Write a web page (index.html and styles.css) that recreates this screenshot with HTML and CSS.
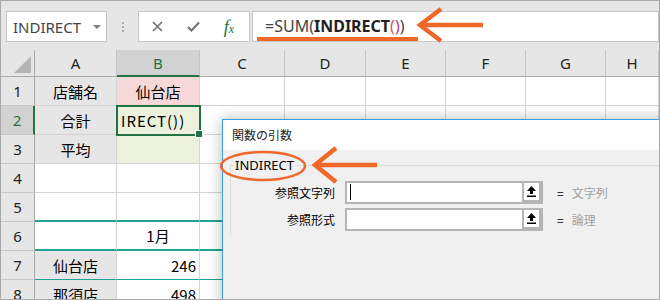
FILE: index.html
```html
<!DOCTYPE html>
<html lang="ja">
<head>
    <meta charset="UTF-8">
    <title>INDIRECT 関数の引数</title>
    <link rel="stylesheet" href="styles.css">
</head>
<body>
<div class="frame">
    <!-- 数式バー -->
    <div class="toolbar">
        <div class="name-box"><span>INDIRECT</span><span class="caret"></span></div>
        <div class="grip"><i></i><i></i><i></i></div>
        <div class="fx-buttons">
            <svg width="11" height="11" viewBox="0 0 11 11"><path d="M1 1L10 10M10 1L1 10" stroke="#6e6e6e" stroke-width="1.6" fill="none"/></svg>
            <svg width="13" height="11" viewBox="0 0 13 11"><path d="M1 6L4.5 9.5L12 1.5" stroke="#6e6e6e" stroke-width="2" fill="none"/></svg>
            <span class="fx">f<small>x</small></span>
        </div>
        <div class="formula">=SUM(<b>INDIRECT</b><span class="paren-a">(</span><span class="paren-b">)</span>)</div>
    </div>

    <!-- シート -->
    <div class="sheet">
        <div class="hd corner"><span class="tri"></span></div>
        <div class="hd">A</div><div class="hd sel-col">B</div><div class="hd">C</div><div class="hd">D</div>
        <div class="hd">E</div><div class="hd">F</div><div class="hd">G</div><div class="hd">H</div>

        <div class="rh">1</div>
        <div class="cell gray">店舗名</div><div class="cell pink">仙台店</div>
        <div class="cell"></div><div class="cell"></div><div class="cell"></div><div class="cell"></div><div class="cell"></div><div class="cell"></div>

        <div class="rh sel-row">2</div>
        <div class="cell gray">合計</div><div class="cell lime left active">IRECT())</div>
        <div class="cell"></div><div class="cell"></div><div class="cell"></div><div class="cell"></div><div class="cell"></div><div class="cell"></div>

        <div class="rh">3</div>
        <div class="cell gray">平均</div><div class="cell lime"></div>
        <div class="cell"></div><div class="cell"></div><div class="cell"></div><div class="cell"></div><div class="cell"></div><div class="cell"></div>

        <div class="rh">4</div>
        <div class="cell"></div><div class="cell"></div>
        <div class="cell"></div><div class="cell"></div><div class="cell"></div><div class="cell"></div><div class="cell"></div><div class="cell"></div>

        <div class="rh">5</div>
        <div class="cell line-thick"></div><div class="cell line-thick"></div><div class="cell line-thick"></div>
        <div class="cell"></div><div class="cell"></div><div class="cell"></div><div class="cell"></div><div class="cell"></div>

        <div class="rh">6</div>
        <div class="cell line-thick"></div><div class="cell line-thick">1月</div><div class="cell line-thick"></div>
        <div class="cell"></div><div class="cell"></div><div class="cell"></div><div class="cell"></div><div class="cell"></div>

        <div class="rh">7</div>
        <div class="cell gray line-thin">仙台店</div><div class="cell num line-thin">246</div><div class="cell line-thin"></div>
        <div class="cell"></div><div class="cell"></div><div class="cell"></div><div class="cell"></div><div class="cell"></div>

        <div class="rh">8</div>
        <div class="cell gray">那須店</div><div class="cell num">498</div><div class="cell"></div>
        <div class="cell"></div><div class="cell"></div><div class="cell"></div><div class="cell"></div><div class="cell"></div>
    </div>

    <!-- 関数の引数ダイアログ -->
    <div class="dialog">
        <div class="dialog-title">関数の引数</div>
        <fieldset class="args">
            <legend>INDIRECT</legend>
            <div class="arg-row">
                <span class="arg-label">参照文字列</span>
                <div class="arg-box">
                    <div class="arg-field"><span class="text-cursor"></span></div>
                    <div class="ref-btn"><span class="ref-icon"><svg width="9" height="11" viewBox="0 0 9 11"><path d="M4.5 0L9 5H6V8H3V5H0Z M0 9.5H9V11H0Z" fill="#000"/></svg></span></div>
                </div>
                <span class="eq">=</span>
                <span class="val">文字列</span>
            </div>
            <div class="arg-row">
                <span class="arg-label">参照形式</span>
                <div class="arg-box">
                    <div class="arg-field"></div>
                    <div class="ref-btn"><span class="ref-icon"><svg width="9" height="11" viewBox="0 0 9 11"><path d="M4.5 0L9 5H6V8H3V5H0Z M0 9.5H9V11H0Z" fill="#000"/></svg></span></div>
                </div>
                <span class="eq">=</span>
                <span class="val">論理</span>
            </div>
        </fieldset>
    </div>

    <!-- 注釈（オレンジの線・矢印・丸） -->
    <svg class="marks" width="660" height="300" viewBox="0 0 660 300">
        <rect x="257" y="37" width="161" height="4" fill="#f0672a"/>
        <path d="M483 25H421" stroke="#f0672a" stroke-width="4.5"/>
        <polyline points="441,9 420,25 441,41" fill="none" stroke="#f0672a" stroke-width="4.5"/>
        <ellipse cx="263" cy="166" rx="42" ry="14" fill="none" stroke="#f0672a" stroke-width="2.5"/>
        <path d="M377 165H316" stroke="#f0672a" stroke-width="4.5"/>
        <polyline points="336,148 315,165 336,182" fill="none" stroke="#f0672a" stroke-width="4.5"/>
    </svg>
</div>
</body>
</html>
```

FILE: styles.css
```css
* {
    box-sizing: border-box;
}

body {
    margin: 0;
    background: #fff;
    font-family: "Noto Sans", "Noto Sans CJK JP", sans-serif;
}

.frame {
    position: relative;
    width: 660px;
    height: 300px;
    border: 1px solid #a9a9a9;
    overflow: hidden;
    background: #e6e6e6;
}

/* 数式バー */
.toolbar {
    display: flex;
    align-items: flex-start;
    height: 49px;
    padding-top: 10px;
}

.name-box {
    display: flex;
    align-items: center;
    justify-content: space-between;
    margin-left: 5px;
    width: 101px;
    height: 31px;
    padding: 0 5px 0 6px;
    background: #fff;
    border: 1px solid #c6c6c6;
    font-size: 15px;
    color: #444;
}

.caret {
    border-left: 4px solid transparent;
    border-right: 4px solid transparent;
    border-top: 4px solid #7a7a7a;
}

.grip {
    display: flex;
    flex-direction: column;
    align-items: center;
    gap: 2px;
    width: 31px;
    padding-top: 11px;
}

.grip i {
    width: 2px;
    height: 2px;
    background: #adadad;
}

.fx-buttons {
    display: grid;
    grid-template-columns: repeat(3, 36px);
    justify-items: center;
    align-items: center;
    width: 112px;
    height: 31px;
    background: #fff;
    border: 1px solid #c6c6c6;
}

.fx {
    font-family: "Liberation Serif", serif;
    font-style: italic;
    font-size: 18px;
    color: #217346;
    line-height: 1;
}

.fx small {
    font-size: 12px;
}

.formula {
    flex: 1;
    margin-left: 2px;
    height: 31px;
    padding-left: 12px;
    background: #fff;
    border: 1px solid #c6c6c6;
    font-size: 16px;
    line-height: 29px;
    color: #444;
}

.formula b {
    color: #222;
}

.paren-a {
    color: #d4553c;
}

.paren-b {
    color: #b6359d;
}

/* シート */
.sheet {
    display: grid;
    grid-template-columns: 34px 82px 83px 85px 81px 80px 80px 80px 1fr;
    grid-template-rows: 27px repeat(8, 29px);
    background: #fff;
}

.hd,
.rh {
    display: flex;
    align-items: center;
    justify-content: center;
    background: #e6e6e6;
    font-size: 15px;
    color: #222;
}

.hd {
    border-right: 1px solid #c6c6c6;
    border-bottom: 1px solid #ababab;
}

.corner {
    justify-content: flex-end;
    align-items: flex-end;
    padding: 0 3px 3px 0;
    border-right-color: #ababab;
}

.tri {
    width: 17px;
    height: 17px;
    background: #b4b4b4;
    clip-path: polygon(100% 0, 100% 100%, 0 100%);
}

.sel-col {
    background: #d2d2d2;
    color: #217346;
    border-bottom: 2px solid #217346;
}

.rh {
    border-right: 1px solid #ababab;
    border-bottom: 1px solid #c6c6c6;
}

.sel-row {
    background: #d2d2d2;
    color: #217346;
    border-right: 2px solid #217346;
}

.cell {
    display: flex;
    align-items: center;
    justify-content: center;
    border-right: 1px solid #d4d4d4;
    border-bottom: 1px solid #d4d4d4;
    font-family: "Noto Sans CJK JP", sans-serif;
    font-size: 15px;
    color: #000;
}

.gray {
    background: #e7e6e6;
}

.pink {
    background: #f7d8d8;
}

.lime {
    background: #ebf1dc;
}

.left {
    justify-content: flex-start;
    padding-left: 4px;
    letter-spacing: 1px;
}

.num {
    justify-content: flex-end;
    padding-right: 3px;
}

.active {
    position: relative;
    z-index: 1;
    outline: 2px solid #217346;
    outline-offset: -1px;
}

.active::after {
    content: "";
    position: absolute;
    right: -4px;
    bottom: -4px;
    width: 6px;
    height: 6px;
    background: #217346;
    border: 1px solid #fff;
}

.line-thick {
    border-bottom: 2px solid #1fa595;
}

.line-thin {
    border-bottom-color: #1fa595;
}

/* ダイアログ */
.dialog {
    position: absolute;
    left: 221px;
    top: 118px;
    right: -30px;
    bottom: -30px;
    z-index: 2;
    background: #f0f0f0;
    border: 1px solid #3d9ee0;
    box-shadow: 0 0 14px rgba(0, 0, 0, 0.28);
}

.dialog-title {
    height: 30px;
    padding-left: 9px;
    background: #fff;
    font-family: "Noto Sans CJK JP", sans-serif;
    font-size: 12px;
    line-height: 30px;
    color: #222;
}

.args {
    margin: 6px 0 0 7px;
    padding: 7px 0 0 0;
    min-width: 0;
    border: 1px solid #dcdcdc;
    border-right: none;
    border-bottom: none;
}

.args legend {
    margin-left: 2px;
    padding: 0 2px;
    font-size: 13px;
    line-height: 18px;
    color: #000;
}

.arg-row {
    display: flex;
    align-items: center;
    height: 23px;
    margin-bottom: 4px;
    font-family: "Noto Sans CJK JP", sans-serif;
    font-size: 12px;
}

.arg-label {
    width: 104px;
    margin-right: 10px;
    text-align: right;
    color: #000;
}

.arg-box {
    display: flex;
    width: 198px;
    height: 23px;
    background: #fff;
    border: 2px solid #b4b4b4;
}

.arg-field {
    flex: 1;
}

.text-cursor {
    display: block;
    width: 1px;
    height: 16px;
    margin: 1px 0 0 3px;
    background: #000;
}

.ref-btn {
    width: 19px;
    padding: 0 2px 2px 2px;
    background: #b4b4b4;
}

.ref-icon {
    display: flex;
    align-items: center;
    justify-content: center;
    height: 100%;
    background: #fff;
}

.eq {
    margin-left: 14px;
    color: #000;
}

.val {
    margin-left: 8px;
    color: #a0a0a0;
}

.marks {
    position: absolute;
    left: -1px;
    top: -1px;
    z-index: 5;
    pointer-events: none;
}
```
